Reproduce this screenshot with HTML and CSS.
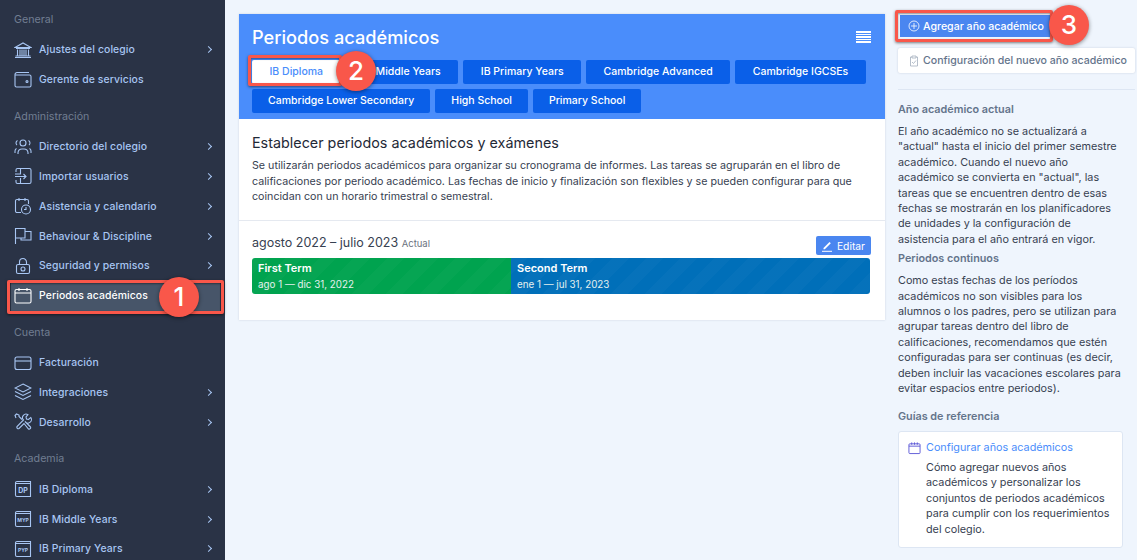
FILE: index.html
```html
<!DOCTYPE html>
<html lang="es">
<head>
<meta charset="utf-8">
<title>Periodos académicos</title>
<link rel="stylesheet" href="styles.css">
</head>
<body>
<div class="app">
  <nav class="sidebar">
    <section class="nav-section">
      <h4 class="nav-label">General</h4>
      <a class="nav-item"><svg class="nav-icon" viewBox="0 0 18 18"><path d="M1 6.500 9 2l8 4.500zM2 7.500h14M3.500 8.500v6M6 8.500v6M8 8.500v6M10 8.500v6M12 8.500v6M14.500 8.500v6M1.500 15h15M1 16.500h16"/></svg><span class="nav-text">Ajustes del colegio</span><span class="chev"></span></a>
      <a class="nav-item"><svg class="nav-icon" viewBox="0 0 18 18"><path d="M15 1.500H3A2 2 0 0 0 1 3.500v11A1.500 1.500 0 0 0 2.500 16h13a1.500 1.500 0 0 0 1.500-1.500v-9A1.500 1.500 0 0 0 15.500 4H1.500"/><circle cx="13" cy="10.500" r="1"/></svg><span class="nav-text">Gerente de servicios</span></a>
    </section>
    <section class="nav-section">
      <h4 class="nav-label">Administración</h4>
      <a class="nav-item"><svg class="nav-icon" viewBox="0 0 18 18"><circle cx="9" cy="5" r="3"/><path d="M4 16v-1.500A4 4 0 0 1 8 11h2a4 4 0 0 1 4 3.500V16M3.500 2.500a3 3 0 0 0-1.500 2.500 3 3 0 0 0 1 2M14.500 2.500A3 3 0 0 1 16 5a3 3 0 0 1-1 2M1 15v-2a3 3 0 0 1 1.500-2.500M17 15v-2a3 3 0 0 0-1.500-2.500"/></svg><span class="nav-text">Directorio del colegio</span><span class="chev"></span></a>
      <a class="nav-item"><svg class="nav-icon" viewBox="0 0 18 18"><path d="M2 5V3a1.500 1.500 0 0 1 1.500-1.500h12A1.500 1.500 0 0 1 17 3v12a1.500 1.500 0 0 1-1.500 1.500h-12A1.500 1.500 0 0 1 2 15v-2M1 7h5.500V1.500M6.500 16.500V11M1 9.500h11M9.500 7l2.500 2.500L9.500 12"/></svg><span class="nav-text">Importar usuarios</span><span class="chev"></span></a>
      <a class="nav-item"><svg class="nav-icon" viewBox="0 0 18 18"><path d="M7 15.500H3A1.500 1.500 0 0 1 1.500 14V4A1.500 1.500 0 0 1 3 2.500h10A1.500 1.500 0 0 1 14.500 4v3M5 1v3M11 1v3"/><circle cx="12" cy="12.500" r="4.500"/><path d="M12 10v2.500h-2"/></svg><span class="nav-text">Asistencia y calendario</span><span class="chev"></span></a>
      <a class="nav-item"><svg class="nav-icon" viewBox="0 0 18 18"><path d="M1.500 17V1.500H11V11H1.500M11 4.500h6V13H7v-2"/></svg><span class="nav-text">Behaviour &amp; Discipline</span><span class="chev"></span></a>
      <a class="nav-item"><svg class="nav-icon" viewBox="0 0 18 18"><rect x="2.500" y="7.500" width="13" height="9" rx="1.500"/><path d="M5.500 7.500V5a3.500 3.500 0 0 1 7 0v2.500"/><circle cx="9" cy="12" r="2"/></svg><span class="nav-text">Seguridad y permisos</span><span class="chev"></span></a>
      <a class="nav-item nav-item-active"><svg class="nav-icon" viewBox="0 0 18 18"><rect x="1" y="2.500" width="16" height="13.500" rx="1.500"/><path d="M1 6h16M5 1v3M13 1v3"/></svg><span class="nav-text">Periodos académicos</span></a>
    </section>
    <section class="nav-section">
      <h4 class="nav-label">Cuenta</h4>
      <a class="nav-item"><svg class="nav-icon" viewBox="0 0 18 18"><rect x="1" y="3" width="16" height="12.500" rx="2"/><path d="M1 7h16"/></svg><span class="nav-text">Facturación</span></a>
      <a class="nav-item"><svg class="nav-icon" viewBox="0 0 18 18"><path d="m9 1 8 4-8 4-8-4zM1 8.500l8 4 8-4M1 12.500l8 4 8-4"/></svg><span class="nav-text">Integraciones</span><span class="chev"></span></a>
      <a class="nav-item"><svg class="nav-icon" viewBox="0 0 18 18"><path d="M2 5 1 2.500 2.500 1 5 2v1.500l3 3M16.500 14 11 8.500A3.500 3.500 0 0 0 16.800 4.500L14.500 6.500 12.500 6 12 4l2-2.300A3.500 3.500 0 0 0 9.500 7L3 13.500a2 2 0 0 0 0 1.500l.5.500a1.500 1.500 0 0 0 1.500 0l5-5 4.500 5.500a1.500 1.500 0 0 0 2-2z"/></svg><span class="nav-text">Desarrollo</span><span class="chev"></span></a>
    </section>
    <section class="nav-section">
      <h4 class="nav-label">Academia</h4>
      <a class="nav-item"><svg class="nav-icon" viewBox="0 0 18 18"><path d="M3 1.500h13.500v15H3A1.500 1.500 0 0 1 1.500 15V3A1.500 1.500 0 0 1 3 1.500zM1.500 3.500h15"/><text class="badge-text" x="9" y="12.500">DP</text></svg><span class="nav-text">IB Diploma</span><span class="chev"></span></a>
      <a class="nav-item"><svg class="nav-icon" viewBox="0 0 18 18"><path d="M3 1.500h13.500v15H3A1.500 1.500 0 0 1 1.500 15V3A1.500 1.500 0 0 1 3 1.500zM1.500 3.500h15"/><text class="badge-text badge-small" x="9" y="12">MYP</text></svg><span class="nav-text">IB Middle Years</span><span class="chev"></span></a>
      <a class="nav-item"><svg class="nav-icon" viewBox="0 0 18 18"><path d="M3 1.500h13.500v15H3A1.500 1.500 0 0 1 1.500 15V3A1.500 1.500 0 0 1 3 1.500zM1.500 3.500h15"/><text class="badge-text badge-small" x="9" y="12">PYP</text></svg><span class="nav-text">IB Primary Years</span><span class="chev"></span></a>
    </section>
  </nav>

  <main class="card">
    <header class="card-header">
      <div class="title-row">
        <h1 class="title">Periodos académicos</h1>
        <span class="menu-icon"></span>
      </div>
      <div class="tabs">
        <a class="tab tab-wide tab-active">IB Diploma</a>
        <a class="tab tab-wide">IB Middle Years</a>
        <a class="tab tab-wide">IB Primary Years</a>
        <a class="tab tab-wide">Cambridge Advanced</a>
        <a class="tab tab-wide">Cambridge IGCSEs</a>
        <a class="tab">Cambridge Lower Secondary</a>
        <a class="tab">High School</a>
        <a class="tab">Primary School</a>
      </div>
    </header>
    <div class="intro">
      <h2 class="intro-title">Establecer periodos académicos y exámenes</h2>
      <p class="intro-text">Se utilizarán periodos académicos para organizar su cronograma de informes. Las tareas se agruparán en el libro de calificaciones por periodo académico. Las fechas de inicio y finalización son flexibles y se pueden configurar para que coincidan con un horario trimestral o semestral.</p>
    </div>
    <div class="year">
      <div class="year-row">
        <div class="year-name">agosto 2022 – julio 2023 <small class="year-tag">Actual</small></div>
        <a class="edit-btn"><svg class="edit-icon" viewBox="0 0 10 12"><path class="edit-pen" d="M1.500 8 7.500 2l1.300 1.300-6 6H1.500z"/><path d="M0 11.300h10"/></svg>Editar</a>
      </div>
      <div class="terms">
        <div class="term term-green"><b class="term-name">First Term</b><span class="term-date">ago 1 — dic 31, 2022</span></div>
        <div class="term term-blue"><b class="term-name">Second Term</b><span class="term-date">ene 1 — jul 31, 2023</span></div>
      </div>
    </div>
  </main>

  <aside class="side">
    <a class="add-btn"><svg class="btn-icon" viewBox="0 0 12 12"><circle cx="6" cy="6" r="5"/><path d="M6 3v6M3 6h6"/></svg>Agregar año académico</a>
    <a class="config-btn"><svg class="btn-icon" viewBox="0 0 12 12"><path d="M4 2H2.500v9h7V2H8M4 1h4v2H4zM4 7l1.500 1.500L8 5.500"/></svg>Configuración del nuevo año académico</a>
    <hr class="side-rule">
    <h3 class="side-title">Año académico actual</h3>
    <p class="side-text">El año académico no se actualizará a<br>"actual" hasta el inicio del primer semestre<br>académico. Cuando el nuevo año<br>académico se convierta en "actual", las<br>tareas que se encuentren dentro de esas<br>fechas se mostrarán en los planificadores<br>de unidades y la configuración de<br>asistencia para el año entrará en vigor.</p>
    <h3 class="side-title">Periodos continuos</h3>
    <p class="side-text">Como estas fechas de los períodos<br>académicos no son visibles para los<br>alumnos o los padres, pero se utilizan para<br>agrupar tareas dentro del libro de<br>calificaciones, recomendamos que estén<br>configuradas para ser continuas (es decir,<br>deben incluir las vacaciones escolares para<br>evitar espacios entre periodos).</p>
    <h3 class="side-title side-title-guides">Guías de referencia</h3>
    <div class="guide">
      <svg class="guide-icon" viewBox="0 0 14 14"><rect x="1" y="2.500" width="12" height="10.500" rx="1"/><path d="M1 5h12M4 1v2.500M7 1v2.500M10 1v2.500"/></svg>
      <div>
        <a class="guide-link">Configurar años académicos</a>
        <p class="guide-text">Cómo agregar nuevos años académicos y personalizar los conjuntos de periodos académicos para cumplir con los requerimientos del colegio.</p>
      </div>
    </div>
  </aside>
</div>

<div class="callout-box box-one"></div>
<div class="callout-box box-two"></div>
<div class="callout-box box-three"></div>
<div class="callout-num num-one">1</div>
<div class="callout-num num-two">2</div>
<div class="callout-num num-three">3</div>
</body>
</html>
```

FILE: styles.css
```css
* { box-sizing: border-box; }
html, body { margin: 0; height: 560px; overflow: hidden; }
body {
  position: relative;
  background: #eff5fd;
  font-family: Inter, "Liberation Sans", sans-serif;
  color: #374151;
  font-size: 11px;
}
.app { display: flex; height: 560px; align-items: flex-start; }

/* Sidebar */
.sidebar {
  flex: 0 0 225px;
  height: 560px;
  overflow: hidden;
  background: #2a3346;
  padding-top: 10px;
}
.nav-section { margin-bottom: 12.200px; }
.nav-label {
  margin: 0 0 5px;
  padding-left: 14px;
  height: 20px;
  line-height: 20px;
  font-size: 10.700px;
  font-weight: 400;
  color: #717e92;
}
.nav-item {
  display: flex;
  align-items: center;
  height: 29.800px;
  padding: 0 12px 0 14px;
  color: #a8c6f3;
}
.nav-item-active {
  color: #fff;
  background: #475569;
  margin: 0 5px 0 11px;
  padding-left: 3px;
  padding-right: 6px;
}
.nav-icon {
  flex: 0 0 18px;
  width: 18px;
  height: 18px;
  margin-right: 7px;
  fill: none;
  stroke: currentColor;
  stroke-width: 1.100;
}
.nav-text { flex: 1; font-size: 10.400px; font-weight: 500; letter-spacing: .01em; }
.chev {
  width: 5px;
  height: 5px;
  margin-right: 2px;
  border-top: 1.200px solid currentColor;
  border-right: 1.200px solid currentColor;
  transform: rotate(45deg);
}
.badge-text {
  fill: currentColor;
  stroke: none;
  font-size: 7px;
  font-weight: 700;
  text-anchor: middle;
}
.badge-small { font-size: 5px; }

/* Main card */
.card {
  flex: 0 0 646px;
  margin: 14px 0 0 14px;
  background: #fff;
  box-shadow: 0 0 2px rgba(100, 116, 139, .25);
}
.card-header { background: #4a8dfb; padding: 10px 13px 6px; height: 105px; }
.title-row { display: flex; align-items: center; justify-content: space-between; height: 26px; margin-bottom: 10px; }
.title { margin: 0; font-size: 18.200px; line-height: 26px; font-weight: 500; color: #fff; }
.menu-icon {
  width: 15px;
  height: 12px;
  margin-right: 1px;
  background: repeating-linear-gradient(#fff 0 1.500px, transparent 1.500px 2.500px);
}
.tabs { display: flex; flex-wrap: wrap; gap: 5px; }
.tab {
  height: 24px;
  line-height: 24px;
  padding: 0 16px;
  border-radius: 2px;
  background: #0a5fe8;
  color: #fff;
  font-size: 10.500px;
  font-weight: 500;
  white-space: nowrap;
}
.tab-wide { padding: 0 17.500px; }
.tab-active { background: #fff; color: #4a8dfb; }
.intro { padding: 14px 13px 16px; border-bottom: 1px solid #e5e9f0; height: 102px; }
.intro-title { margin: 0 0 5px; font-size: 14.350px; line-height: 20px; font-weight: 400; color: #1f2937; }
.intro-text { margin: 0; font-size: 10.700px; line-height: 15.500px; }
.year { padding: 14px 15px 26px 13px; }
.year-row { display: flex; align-items: flex-start; justify-content: space-between; height: 23px; }
.year-name { font-size: 12.500px; line-height: 16px; color: #374151; }
.year-tag { font-size: 9.500px; color: #6b7280; }
.edit-btn {
  display: flex;
  align-items: center;
  height: 19px;
  margin-top: 1px;
  padding: 0 6px;
  margin-right: -1px;
  border-radius: 2px;
  background: #4a86f0;
  color: #fff;
  font-size: 10.300px;
}
.edit-icon { width: 10px; height: 12px; margin-right: 5px; fill: none; stroke: #fff; stroke-width: 1; }
.edit-pen { fill: #fff; stroke: none; }
.terms { display: flex; height: 36px; border-radius: 3px; overflow: hidden; }
.term {
  display: flex;
  flex-direction: column;
  justify-content: space-between;
  padding: 3px 6px 3px;
  color: #fff;
  background-image: repeating-linear-gradient(135deg, rgba(255, 255, 255, .025) 0 12px, transparent 12px 24px);
}
.term-green { flex: 0 0 259px; background-color: #00a34f; }
.term-blue { flex: 1; background-color: #006fb9; }
.term-name { font-size: 11px; font-weight: 600; line-height: 14px; }
.term-date { font-size: 9.800px; line-height: 13px; color: #e4f0ee; }

/* Right column */
.side { flex: 0 0 225px; margin: 15px 0 0 13px; }
.add-btn {
  display: flex;
  align-items: center;
  width: 150px;
  height: 22px;
  margin-left: 2px;
  padding-left: 8px;
  background: #4a86f0;
  color: #fff;
  font-size: 10.600px;
  font-weight: 500;
  white-space: nowrap;
}
.btn-icon { width: 12px; height: 12px; margin-right: 3px; fill: none; stroke: currentColor; stroke-width: .8; flex: none; }
.config-btn {
  display: flex;
  align-items: center;
  width: 237px;
  height: 25px;
  margin-top: 11px;
  padding-left: 10px;
  background: #fff;
  border-radius: 2px;
  color: #64748b;
  font-size: 10.600px;
  font-weight: 500;
  white-space: nowrap;
  box-shadow: 0 0 2px rgba(100, 116, 139, .3);
}
.config-btn .btn-icon { color: #a3afbe; }
.side-rule { margin: 16px 0 13px; border: 0; border-top: 1px solid #dde6f3; }
.side-title { margin: 0 0 7px; font-size: 10.800px; line-height: 14px; font-weight: 600; color: #64748b; }
.side-text { margin: 0 0 5px; font-size: 10.800px; line-height: 15.400px; color: #374151; white-space: nowrap; }
.side-title-guides { margin-top: 13px; margin-bottom: 7px; }
.guide {
  display: flex;
  width: 225px;
  height: 117px;
  padding: 9px 9px;
  background: #fff;
  border: 1px solid #dde6f3;
  border-radius: 3px;
}
.guide-icon { flex: 0 0 13px; width: 13px; height: 14px; margin-right: 5px; fill: none; stroke: #5b56d6; stroke-width: 1; }
.guide-link { display: block; font-size: 10.800px; line-height: 14px; color: #4a8dfb; margin-bottom: 5px; }
.guide-text { margin: 0; font-size: 10.800px; line-height: 15.500px; color: #374151; }

/* Annotations */
.callout-box {
  position: absolute;
  border: 3px solid #f9574a;
  border-radius: 2px;
  box-shadow: 0 1px 3px rgba(0, 0, 0, .5), inset 0 1px 2px rgba(0, 0, 0, .4);
}
.box-one { left: 7px; top: 280px; width: 217px; height: 34px; }
.box-two { left: 248px; top: 55px; width: 94px; height: 31px; }
.box-three { left: 895px; top: 10px; width: 158px; height: 32px; }
.callout-num {
  position: absolute;
  width: 40px;
  height: 40px;
  line-height: 40px;
  text-align: center;
  border-radius: 50%;
  background: #f9574a;
  color: #fff;
  font-family: Inter, sans-serif;
  font-size: 26px;
  font-weight: 500;
  box-shadow: 0 1px 4px rgba(0, 0, 0, .45);
}
.num-one { left: 159px; top: 277px; }
.num-two { left: 336px; top: 51px; }
.num-three { left: 1049px; top: 5px; }
```
